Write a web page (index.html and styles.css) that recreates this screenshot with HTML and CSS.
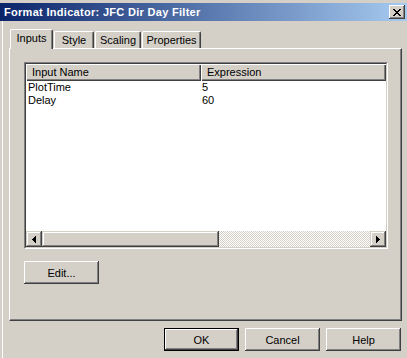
FILE: index.html
```html
<!DOCTYPE html>
<html lang="en">
<head>
    <meta charset="UTF-8">
    <title>Format Indicator: JFC Dir Day Filter</title>
    <link rel="stylesheet" href="styles.css">
</head>
<body>

<div class="window">
    <div class="titlebar">
        <span class="title">Format Indicator: JFC Dir Day Filter</span>
        <button class="close-btn" title="Close">
            <svg width="8" height="7" viewBox="0 0 8 7" shape-rendering="crispEdges">
                <path d="M0 0h2v1h-2zM6 0h2v1h-2zM1 1h2v1h-2zM5 1h2v1h-2zM2 2h4v1h-4zM3 3h2v1h-2zM2 4h4v1h-4zM1 5h2v1h-2zM5 5h2v1h-2zM0 6h2v1h-2zM6 6h2v1h-2z" fill="#000"/>
            </svg>
        </button>
    </div>

    <div class="dialog">
        <div class="tabs">
            <div class="tab active">Inputs</div>
            <div class="tab tab-style">Style</div>
            <div class="tab tab-scaling">Scaling</div>
            <div class="tab tab-props">Properties</div>
        </div>

        <div class="panel">
            <div class="listview">
                <div class="lv-inner">
                    <div class="lv-header">
                        <div class="lv-col col-name">Input Name</div>
                        <div class="lv-col col-expr">Expression</div>
                    </div>
                    <div class="lv-rows">
                        <div class="lv-row">
                            <span class="cell-name">PlotTime</span>
                            <span class="cell-expr">5</span>
                        </div>
                        <div class="lv-row">
                            <span class="cell-name">Delay</span>
                            <span class="cell-expr">60</span>
                        </div>
                    </div>
                    <div class="hscroll">
                        <div class="sb-btn">
                            <svg width="4" height="7" viewBox="0 0 4 7" shape-rendering="crispEdges"><path d="M3 0h1v7h-1zM2 1h1v5h-1zM1 2h1v3h-1zM0 3h1v1h-1z" fill="#000"/></svg>
                        </div>
                        <div class="sb-thumb"></div>
                        <div class="sb-track"></div>
                        <div class="sb-btn">
                            <svg width="4" height="7" viewBox="0 0 4 7" shape-rendering="crispEdges"><path d="M0 0h1v7h-1zM1 1h1v5h-1zM2 2h1v3h-1zM3 3h1v1h-1z" fill="#000"/></svg>
                        </div>
                    </div>
                </div>
            </div>
            <button class="win-btn edit-btn">Edit...</button>
        </div>

        <div class="buttons">
            <button class="win-btn default-btn">OK</button>
            <button class="win-btn">Cancel</button>
            <button class="win-btn">Help</button>
        </div>
    </div>
</div>

</body>
</html>
```

FILE: styles.css
```css
body {
    margin: 0;
    background-color: #d4d0c8;
    font-family: "Liberation Sans", Arial, sans-serif;
    font-size: 11px;
    color: #000;
}

.window {
    width: 407px;
    height: 358px;
    padding-top: 3px;
    box-sizing: border-box;
    overflow: hidden;
}

/* title bar */
.titlebar {
    display: flex;
    align-items: center;
    height: 18px;
    padding: 0 2px 0 4px;
    background: linear-gradient(to right, #0a246a, #a6caf0);
}
.title {
    color: #fff;
    font-weight: bold;
    letter-spacing: 0.3px;
    line-height: 13px;
}
.close-btn {
    display: flex;
    align-items: center;
    justify-content: center;
    width: 16px;
    height: 14px;
    margin-left: auto;
    padding: 0;
    border: none;
    background-color: #d4d0c8;
    box-shadow: inset -1px -1px #404040, inset 1px 1px #fff, inset -2px -2px #808080;
}

/* window frame edge on the left */
.dialog {
    height: 337px;
    background: linear-gradient(to right, #d4d0c8 2px, #fff 2px, #fff 3px, #d4d0c8 3px);
}

/* tabs */
.tabs {
    display: flex;
    align-items: flex-end;
    gap: 1px;
    padding: 8px 0 0 10px;
}
.tab {
    box-sizing: border-box;
    height: 17px;
    padding-top: 2px;
    line-height: 13px;
    text-align: center;
    border-top: 1px solid #fff;
    border-left: 1px solid #fff;
    border-right: 1px solid #404040;
    border-radius: 2px 2px 0 0;
    box-shadow: inset -1px 0 #808080;
}
.tab.active {
    position: relative;
    z-index: 1;
    width: 43px;
    height: 20px;
    margin-bottom: -1px;
    background-color: #d4d0c8;
}
.tab-style { width: 40px; }
.tab-scaling { width: 46px; }
.tab-props { width: 59px; }

/* tab page */
.panel {
    box-sizing: border-box;
    width: 393px;
    height: 273px;
    margin-left: 9px;
    padding: 13px 0 0 14px;
    border-top: 1px solid #fff;
    border-left: 1px solid #fff;
    border-right: 1px solid #404040;
    border-bottom: 1px solid #404040;
    box-shadow: inset -1px -1px #808080;
}

.listview {
    box-sizing: border-box;
    width: 364px;
    height: 187px;
    border-top: 1px solid #808080;
    border-left: 1px solid #808080;
    border-right: 1px solid #fff;
    border-bottom: 1px solid #fff;
}
.lv-inner {
    display: flex;
    flex-direction: column;
    height: 100%;
    box-sizing: border-box;
    background-color: #fff;
    border-top: 1px solid #404040;
    border-left: 1px solid #404040;
    border-right: 1px solid #d4d0c8;
    border-bottom: 1px solid #d4d0c8;
}
.lv-header {
    display: flex;
    height: 17px;
}
.lv-col {
    box-sizing: border-box;
    padding-left: 6px;
    line-height: 16px;
    background-color: #d4d0c8;
    box-shadow: inset 1px 1px #fff, inset -1px -1px #404040, inset -2px -2px #808080;
}
.col-name { width: 175px; }
.col-expr { flex: 1; }

.lv-rows {
    flex: 1;
}
.lv-row {
    display: flex;
    height: 13px;
    line-height: 13px;
}
.cell-name {
    width: 175px;
    padding-left: 2px;
    box-sizing: border-box;
}
.cell-expr {
    padding-left: 1px;
}

/* horizontal scrollbar */
.hscroll {
    display: flex;
    height: 16px;
}
.sb-btn, .sb-thumb {
    box-sizing: border-box;
    background-color: #d4d0c8;
    box-shadow: inset -1px -1px #404040, inset 1px 1px #d4d0c8, inset -2px -2px #808080, inset 2px 2px #fff;
}
.sb-btn {
    display: flex;
    align-items: center;
    justify-content: center;
    width: 16px;
}
.sb-thumb {
    width: 177px;
}
.sb-track {
    flex: 1;
    background: repeating-conic-gradient(#fff 0 25%, #d4d0c8 0 50%) 0 0 / 2px 2px;
}

/* buttons */
.win-btn {
    display: block;
    box-sizing: border-box;
    width: 75px;
    height: 23px;
    padding: 0;
    font-family: "Liberation Sans", Arial, sans-serif;
    font-size: 11px;
    color: #000;
    background-color: #d4d0c8;
    border: none;
    box-shadow: inset -1px -1px #404040, inset 1px 1px #fff, inset -2px -2px #808080, inset 2px 2px #d4d0c8;
}
.default-btn {
    border: 1px solid #000;
}
.edit-btn {
    margin-top: 12px;
}

.buttons {
    display: flex;
    justify-content: flex-end;
    gap: 6px;
    padding: 7px 6px 0 0;
}
```
